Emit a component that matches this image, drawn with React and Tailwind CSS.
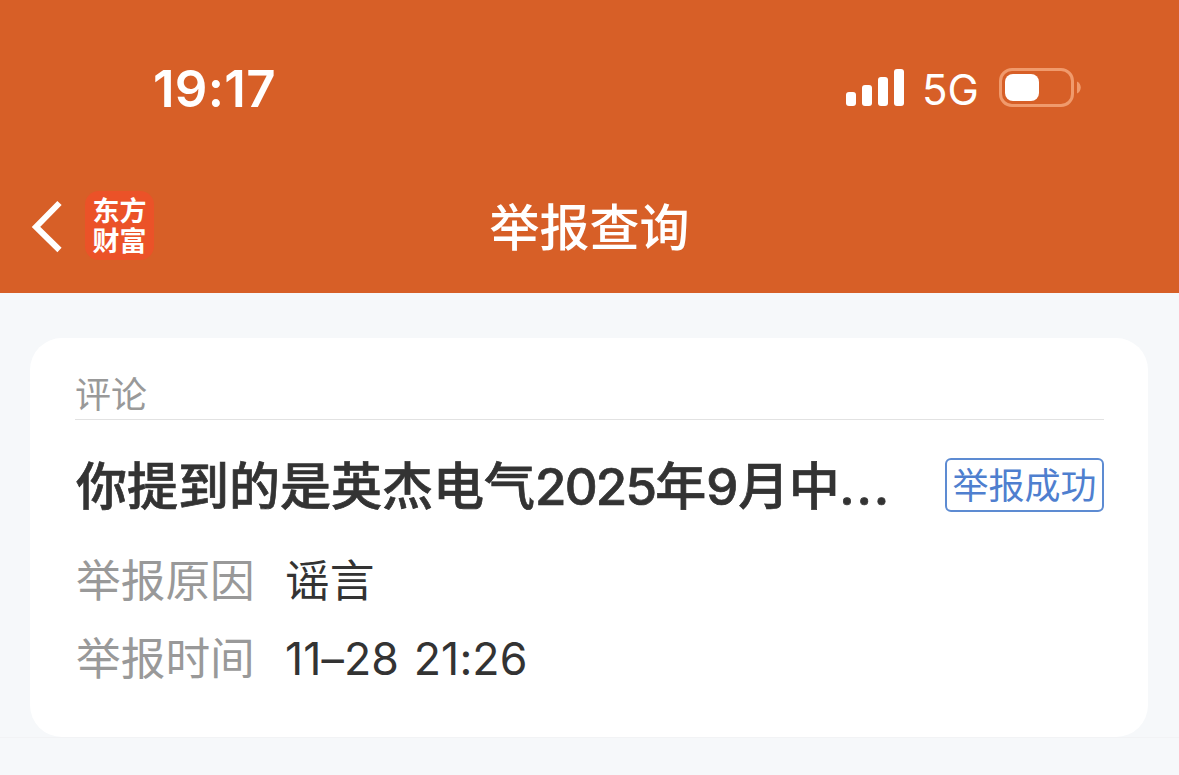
const report = {
  type: '评论',
  status: '举报成功',
  reason: '谣言',
  time: '11–28 21:26',
};

function SignalIcon() {
  return (
    <svg width="58" height="38" viewBox="0 0 58 38" fill="#fff">
      <rect x="0" y="23" width="10" height="14" rx="3" />
      <rect x="16" y="16" width="10" height="21" rx="3" />
      <rect x="32" y="8" width="10" height="29" rx="3" />
      <rect x="48" y="0" width="10" height="37" rx="3" />
    </svg>
  );
}

function BatteryIcon() {
  return (
    <svg width="82" height="40" viewBox="0 0 82 40">
      <rect x="1.5" y="1.5" width="72" height="36" rx="11.5" fill="none" stroke="#f09a6c" strokeWidth="3" />
      <rect x="6" y="6" width="34" height="27" rx="8" fill="#fff" />
      <path d="M78 13.5C83 15.5 83 23.5 78 25.5Z" fill="#f09a6c" />
    </svg>
  );
}

function StatusBar() {
  return (
    <div className="flex h-[160px] items-start justify-between pt-[59px] pr-[98px] pl-[153px] text-white">
      <span className="pt-px text-[51px] leading-[58px] font-semibold tracking-[0.3px]">19:17</span>
      <div className="flex h-[58px] items-center">
        <SignalIcon />
        <span className="ml-[18px] w-[58px] pt-[3px] text-[42px] leading-[50px] whitespace-nowrap">5G</span>
        <span className="ml-[19px]">
          <BatteryIcon />
        </span>
      </div>
    </div>
  );
}

function NavBar() {
  return (
    <div className="grid h-[133px] grid-cols-[1fr_auto_1fr] items-start text-white">
      <div className="flex items-center pt-[31px] pl-[30px]">
        <svg width="34" height="56" viewBox="0 0 34 56" fill="none" stroke="#fff" strokeWidth="6">
          <path d="M29.5 5L6 29L29.5 52" />
        </svg>
        <div className="ml-[21px] flex h-[69px] w-[69px] flex-col items-center justify-center rounded-[14px] bg-[#eb5228] pt-[3px] text-[27px] leading-[30px] font-bold">
          <span>东方</span>
          <span>财富</span>
        </div>
      </div>
      <h1 className="pt-[38px] text-[50px] leading-[60px] font-medium">举报查询</h1>
    </div>
  );
}

function InfoRow({ label, value }) {
  return (
    <div className="flex h-[78px] items-center text-[44.7px] leading-[78px] whitespace-nowrap">
      <span className="w-[210px] pl-px text-[#999]">{label}</span>
      <span className="tracking-[0.1px] text-[#333] [word-spacing:2px]">{value}</span>
    </div>
  );
}

export default function App() {
  return (
    <div className="h-[775px] overflow-hidden bg-[#f6f8fa] font-[Inter,'Noto_Sans_CJK_SC',sans-serif]">
      <header className="h-[293px] bg-[#d75f27]">
        <StatusBar />
        <NavBar />
      </header>

      <main className="pt-[45px] pr-[31px] pl-[30px]">
        <section className="h-[399px] rounded-[32px] bg-white pr-[44px] pl-[45px]">
          <div className="h-[82px] border-b border-[#e2e2e2] pt-[32px] text-[36px] leading-[50px] text-[#999]">
            {report.type}
          </div>
          <div className="flex h-[122px] items-start justify-between pt-[38px]">
            <h2 className="pt-[2px] pl-px text-[51px] leading-[54px] font-medium whitespace-nowrap text-[#333] [-webkit-text-stroke:0.7px_#333]">
              你提到的是英杰电气
              <span className="tracking-[-1.8px]">2025</span>
              年
              <span>9</span>
              <span className="tracking-[-0.5px]">月中</span>
              <span className="tracking-[1.8px]">...</span>
            </h2>
            <span className="flex h-[54px] w-[159px] items-center justify-center rounded-[6px] border-2 border-[#5d8bd2] pt-px text-[36px] leading-[50px] whitespace-nowrap text-[#4f7fcf]">
              {report.status}
            </span>
          </div>
          <InfoRow label="举报原因" value={report.reason} />
          <InfoRow label="举报时间" value={report.time} />
        </section>
      </main>

      <footer className="h-[38px] border-t border-[#f2f3f5]" />
    </div>
  );
}
